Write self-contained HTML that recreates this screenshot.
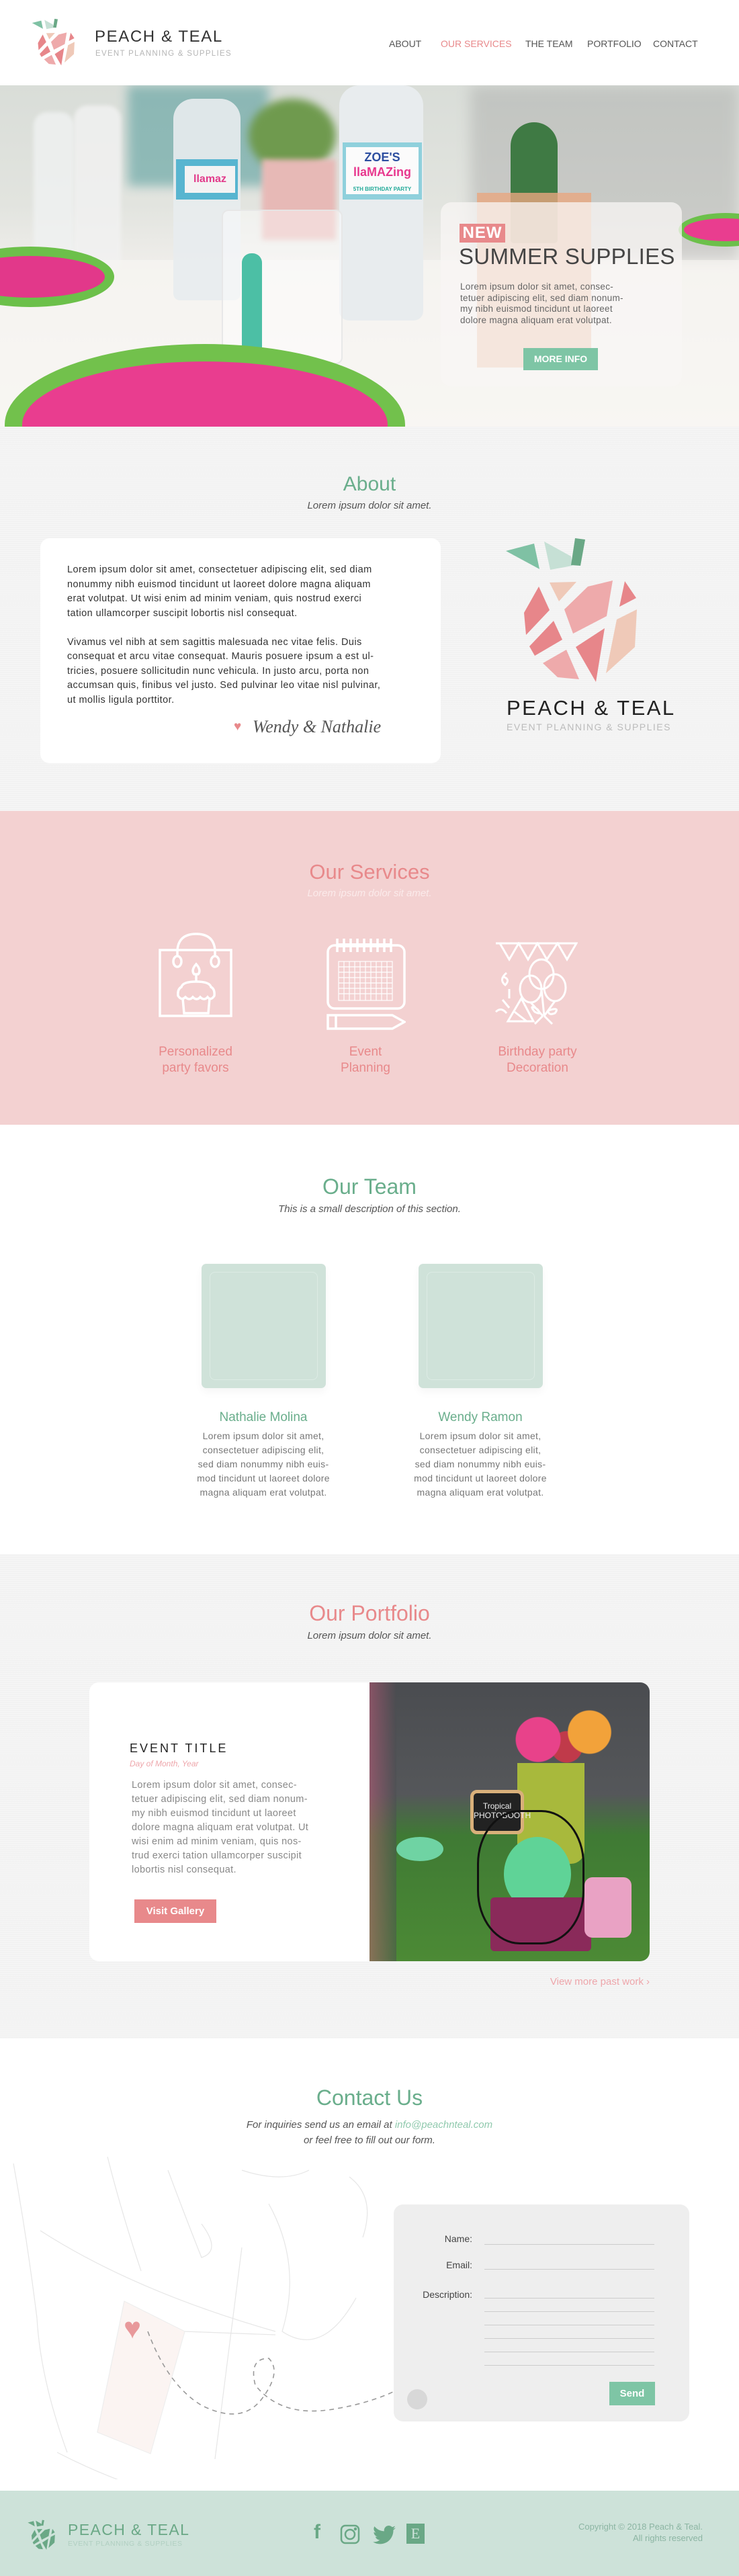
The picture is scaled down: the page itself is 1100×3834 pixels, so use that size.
<!DOCTYPE html>
<html><head><meta charset="utf-8"><style>
*{margin:0;padding:0;box-sizing:border-box}
body{width:1100px;height:3834px;position:relative;font-family:"Liberation Sans",sans-serif;background:#fff;overflow:hidden;color:#333}
.a{position:absolute}
.c{text-align:center;width:1100px;left:0}
.tex{background:#f2f2f2;background-image:repeating-linear-gradient(0deg,rgba(255,255,255,.35) 0 1px,transparent 1px 3px)}
.teal{color:#6aae8c}.pink{color:#e8898b}
</style></head><body>

<svg width="0" height="0" style="position:absolute"><defs>
<g id="logo">
<polygon points="13,30 55,19 63,57" fill="#7fc1a4"/>
<polygon points="70,16 110,38 112,52 79,58" fill="#c6e0d5"/>
<polygon points="116,11 131,13 124,52 110,51" fill="#6aa886"/>
<polygon points="78,77 118,76 92,105" fill="#efc9b8"/>
<polygon points="62,83 78,118 43,155 40,122" fill="#e7868a"/>
<polygon points="100,117 135,83 172,74 163,127 113,153" fill="#eeaaab"/>
<polygon points="190,75 207,100 182,113" fill="#e7868a"/>
<polygon points="84,134 97,162 56,186 48,172" fill="#e7868a"/>
<polygon points="117,173 160,145 147,225" fill="#e7868a"/>
<polygon points="208,117 205,173 162,212 178,132" fill="#efc9b8"/>
<polygon points="68,197 103,177 122,221 90,218" fill="#eeaaab"/>
</g></defs></svg>

<!-- header -->
<svg class="a" style="left:44px;top:27px" width="72" height="72" viewBox="10 8 205 222"><use href="#logo"/></svg>
<div class="a" style="left:141px;top:41px;font-size:24px;letter-spacing:1.6px;color:#333">PEACH &amp; TEAL</div>
<div class="a" style="left:142px;top:74px;font-size:11.5px;letter-spacing:1.3px;color:#b5b5b5">EVENT PLANNING &amp; SUPPLIES</div>
<div class="a" style="top:57px;left:579px;font-size:14px;color:#555">ABOUT</div>
<div class="a pink" style="top:57px;left:656px;font-size:14px">OUR SERVICES</div>
<div class="a" style="top:57px;left:782px;font-size:14px;color:#555">THE TEAM</div>
<div class="a" style="top:57px;left:874px;font-size:14px;color:#555">PORTFOLIO</div>
<div class="a" style="top:57px;left:972px;font-size:14px;color:#555">CONTACT</div>

<!-- hero -->
<div class="a" style="left:0;top:127px;width:1100px;height:508px;overflow:hidden;background:linear-gradient(180deg,#d9ddd8 0%,#e2e4df 35%,#f1efec 55%,#f7f5f2 100%)">
 <div class="a" style="left:190px;top:0;width:210px;height:150px;background:#2f8a8a;opacity:.45;filter:blur(8px)"></div>
 <div class="a" style="left:370px;top:20px;width:130px;height:110px;border-radius:50%;background:#6f9a4e;filter:blur(6px)"></div>
 <div class="a" style="left:390px;top:110px;width:110px;height:120px;background:#e7b9b6;filter:blur(4px)"></div>
 <div class="a" style="left:700px;top:0;width:400px;height:260px;background:#888;opacity:.28;filter:blur(10px)"></div>
 <div class="a" style="left:50px;top:40px;width:60px;height:230px;background:#f0f2f2;border-radius:20px;opacity:.8;filter:blur(3px)"></div>
 <div class="a" style="left:110px;top:30px;width:70px;height:250px;background:#f2f2f2;border-radius:20px;opacity:.8;filter:blur(3px)"></div>
 <div class="a" style="left:0;top:260px;width:1100px;height:250px;background:#f8f6f3;opacity:.6"></div>
 <div class="a" style="left:258px;top:20px;width:100px;height:300px;background:#e8ecee;border-radius:30px 30px 10px 10px;opacity:.9"></div>
 <div class="a" style="left:262px;top:110px;width:92px;height:60px;background:#58b5d0"></div>
 <div class="a" style="left:275px;top:120px;width:75px;height:40px;background:#f3f3f3;color:#e23a8a;font-weight:bold;font-size:16px;text-align:center;line-height:40px">llamaz</div>
 <div class="a" style="left:505px;top:0;width:125px;height:350px;background:#e8ecee;border-radius:30px 30px 14px 14px"></div>
 <div class="a" style="left:510px;top:85px;width:118px;height:85px;background:#8fd0dc"></div>
 <div class="a" style="left:515px;top:92px;width:108px;height:70px;background:#fbfbfb;color:#e8388e;font-weight:bold;font-size:18px;text-align:center;line-height:22px;padding-top:4px"><span style="color:#2c4ea0">ZOE'S</span><br><span style="color:#e8388e">llaMAZing</span><br><span style="font-size:8px;color:#2a9">5TH BIRTHDAY PARTY</span></div>
 <div class="a" style="left:330px;top:185px;width:180px;height:230px;background:rgba(255,255,255,.45);border:2px solid rgba(230,230,230,.9);border-radius:10px"></div>
 <div class="a" style="left:360px;top:250px;width:30px;height:160px;background:#4cbfa5;border-radius:14px"></div>
 <div class="a" style="left:760px;top:55px;width:70px;height:180px;background:#3f7a44;border-radius:35px 35px 5px 5px"></div>
 <div class="a" style="left:710px;top:160px;width:170px;height:260px;background:#e9a67f;opacity:.8"></div>
 <div class="a" style="left:-80px;top:240px;width:250px;height:90px;border-radius:50%;background:#e2388a;border:14px solid #6cc04a"></div>
 <div class="a" style="left:7px;top:385px;width:596px;height:240px;border-radius:50%;background:#e93d8f;border:26px solid #72c14c"></div>
 <div class="a" style="left:1010px;top:190px;width:140px;height:50px;border-radius:50%;background:#e93d8f;border:8px solid #6cc04a"></div>
 <div class="a" style="left:656px;top:174px;width:359px;height:274px;background:rgba(248,246,244,.75);border-radius:16px"></div>
 <div class="a" style="left:684px;top:206px;width:68px;height:28px;background:#e8898b;color:#fff;font-weight:bold;font-size:24px;line-height:28px;text-align:center;letter-spacing:1px">NEW</div>
 <div class="a" style="left:683px;top:236px;font-size:33px;color:#444;letter-spacing:.3px">SUMMER SUPPLIES</div>
 <div class="a" style="left:685px;top:292px;font-size:13.5px;letter-spacing:.3px;line-height:16.5px;color:#666">Lorem ipsum dolor sit amet, consec-<br>tetuer adipiscing elit, sed diam nonum-<br>my nibh euismod tincidunt ut laoreet<br>dolore magna aliquam erat volutpat.</div>
 <div class="a" style="left:779px;top:391px;width:111px;height:33px;background:#7ec5a5;color:#fff;font-size:14px;font-weight:bold;line-height:33px;text-align:center">MORE INFO</div>
</div>

<!-- about -->
<div class="a tex" style="left:0;top:635px;width:1100px;height:572px"></div>
<div class="a c teal" style="top:704px;font-size:30px">About</div>
<div class="a c" style="top:744px;font-size:15px;font-style:italic;color:#555">Lorem ipsum dolor sit amet.</div>
<div class="a" style="left:60px;top:801px;width:596px;height:335px;background:#fff;border-radius:14px"></div>
<div class="a" style="left:100px;top:838px;font-size:14.5px;letter-spacing:.45px;line-height:21.5px;color:#333">Lorem ipsum dolor sit amet, consectetuer adipiscing elit, sed diam<br>nonummy nibh euismod tincidunt ut laoreet dolore magna aliquam<br>erat volutpat. Ut wisi enim ad minim veniam, quis nostrud exerci<br>tation ullamcorper suscipit lobortis nisl consequat.<br><br>Vivamus vel nibh at sem sagittis malesuada nec vitae felis. Duis<br>consequat et arcu vitae consequat. Mauris posuere ipsum a est ul-<br>tricies, posuere sollicitudin nunc vehicula. In justo arcu, porta non<br>accumsan quis, finibus vel justo. Sed pulvinar leo vitae nisl pulvinar,<br>ut mollis ligula porttitor.</div>
<div class="a" style="left:348px;top:1071px;font-size:19px;color:#e8898b">♥</div>
<div class="a" style="left:376px;top:1067px;font-size:26px;font-style:italic;font-family:'Liberation Serif',serif;color:#555">Wendy &amp; Nathalie</div>
<svg class="a" style="left:740px;top:790px" width="260" height="240" viewBox="0 0 260 240"><use href="#logo"/></svg>
<div class="a" style="left:754px;top:1036px;font-size:31px;letter-spacing:2.5px;color:#222">PEACH &amp; TEAL</div>
<div class="a" style="left:754px;top:1074px;font-size:14px;letter-spacing:1.5px;color:#bbb">EVENT PLANNING &amp; SUPPLIES</div>

<!-- services -->
<div class="a" style="left:0;top:1207px;width:1100px;height:467px;background:#f3d1d1"></div>
<div class="a c pink" style="top:1280px;font-size:31px">Our Services</div>
<div class="a c" style="top:1321px;font-size:15px;font-style:italic;color:#fbeaea">Lorem ipsum dolor sit amet.</div>
<svg class="a" style="left:236px;top:1388px" width="112" height="128" viewBox="0 0 112 128" fill="none" stroke="#fff" stroke-width="3.5">
<rect x="2" y="26" width="106" height="98"/><path d="M28 34 V26 Q30 2 56 2 Q82 2 84 26 V34"/><ellipse cx="28" cy="43" rx="6" ry="8"/><ellipse cx="84" cy="43" rx="6" ry="8"/>
<path d="M56 47 Q48 56 53 62 H59 Q64 56 56 47Z M56 62 V73"/><path d="M34 81 Q36 73 56 73 Q76 73 78 81 Q84 84 83 94 Q78 102 73 96 Q68 102 62 96 Q57 102 51 96 Q46 102 40 96 Q34 102 29 94 Q28 84 34 81Z"/><path d="M36 98 L38 120 H74 L76 98"/></svg>
<svg class="a" style="left:486px;top:1395px" width="118" height="138" viewBox="0 0 118 138" fill="none" stroke="#fff" stroke-width="3.5">
<rect x="2" y="12" width="114" height="94" rx="10"/><path d="M16 2V22M26 2V22M36 2V22M46 2V22M56 2V22M66 2V22M76 2V22M86 2V22M96 2V22" /><path d="M16 12H96" stroke-width="6"/>
<g stroke-width="1.2"><rect x="18" y="36" width="80" height="58"/><path d="M26 36V94M34 36V94M42 36V94M50 36V94M58 36V94M66 36V94M74 36V94M82 36V94M90 36V94M18 44H98M18 52H98M18 60H98M18 68H98M18 76H98M18 84H98"/></g>
<path d="M2 116H98L116 126L98 136H2Z M14 116V136"/></svg>
<svg class="a" style="left:736px;top:1402px" width="124" height="124" viewBox="0 0 124 124" fill="none" stroke="#fff" stroke-width="3">
<path d="M2 2H122L108 26L94 2L78 26L64 2L50 26L36 2L22 26L8 2"/><ellipse cx="70" cy="48" rx="18" ry="22"/><ellipse cx="54" cy="70" rx="16" ry="20"/><ellipse cx="90" cy="68" rx="16" ry="20"/><path d="M70 70L74 110M54 90L72 110M90 88L74 110M72 110L60 122M74 110L86 122M64 100Q50 92 60 104Q72 110 64 100M80 102Q98 96 90 106Q80 110 80 102"/>
<path d="M20 118L40 84L58 118Z M30 104L48 118"/><path d="M18 46Q6 56 16 64Q24 56 14 52M12 86L22 98M22 70V84M2 104Q10 96 18 106"/></svg>
<div class="a pink" style="left:191px;top:1554px;width:200px;text-align:center;font-size:19px;line-height:24px">Personalized<br>party favors</div>
<div class="a pink" style="left:444px;top:1554px;width:200px;text-align:center;font-size:19px;line-height:24px">Event<br>Planning</div>
<div class="a pink" style="left:700px;top:1554px;width:200px;text-align:center;font-size:19px;line-height:24px">Birthday party<br>Decoration</div>

<!-- team -->
<div class="a c teal" style="top:1748px;font-size:32px">Our Team</div>
<div class="a c" style="top:1791px;font-size:15px;font-style:italic;color:#555">This is a small description of this section.</div>
<div class="a" style="left:300px;top:1881px;width:185px;height:185px;background:#cfe2d9;border-radius:7px;box-shadow:0 6px 12px rgba(0,0,0,.04)"><div style="margin:12px;height:161px;border:1px solid #dcebe4;border-radius:8px"></div></div>
<div class="a" style="left:623px;top:1881px;width:185px;height:185px;background:#cfe2d9;border-radius:7px;box-shadow:0 6px 12px rgba(0,0,0,.04)"><div style="margin:12px;height:161px;border:1px solid #dcebe4;border-radius:8px"></div></div>
<div class="a teal" style="left:242px;top:2099px;width:300px;text-align:center;font-size:19px">Nathalie Molina</div>
<div class="a teal" style="left:565px;top:2099px;width:300px;text-align:center;font-size:19px">Wendy Ramon</div>
<div class="a" style="left:242px;top:2127px;width:300px;text-align:center;font-size:14px;letter-spacing:.3px;line-height:21px;color:#777">Lorem ipsum dolor sit amet,<br>consectetuer adipiscing elit,<br>sed diam nonummy nibh euis-<br>mod tincidunt ut laoreet dolore<br>magna aliquam erat volutpat.</div>
<div class="a" style="left:565px;top:2127px;width:300px;text-align:center;font-size:14px;letter-spacing:.3px;line-height:21px;color:#777">Lorem ipsum dolor sit amet,<br>consectetuer adipiscing elit,<br>sed diam nonummy nibh euis-<br>mod tincidunt ut laoreet dolore<br>magna aliquam erat volutpat.</div>

<!-- portfolio -->
<div class="a tex" style="left:0;top:2313px;width:1100px;height:721px"></div>
<div class="a c pink" style="top:2383px;font-size:32px">Our Portfolio</div>
<div class="a c" style="top:2426px;font-size:15px;font-style:italic;color:#555">Lorem ipsum dolor sit amet.</div>
<div class="a" style="left:133px;top:2504px;width:834px;height:415px;background:#fff;border-radius:14px;overflow:hidden">
 <div class="a" style="left:417px;top:0;width:417px;height:415px;background:linear-gradient(180deg,#4a4c50 0%,#55575a 40%,#3f7a34 55%,#4c8a35 100%)">
  <div class="a" style="left:0;top:0;width:40px;height:415px;background:linear-gradient(90deg,#c45a7a,#4a4c50);opacity:.5"></div>
  <div class="a" style="left:40px;top:230px;width:70px;height:36px;border-radius:50%;background:#6fd3a3"></div>
  <div class="a" style="left:220px;top:120px;width:100px;height:150px;background:#a8b93c;border-radius:0 0 20px 20px"></div>
  <div class="a" style="left:150px;top:160px;width:80px;height:66px;background:#222;border:5px solid #d9b07a;border-radius:10px;color:#eee;font-size:12px;text-align:center;padding-top:12px">Tropical<br>PHOTOBOOTH</div>
  <div class="a" style="left:200px;top:30px;width:170px;height:110px;background:radial-gradient(circle at 30% 50%,#e8428a 0 25%,transparent 26%),radial-gradient(circle at 75% 40%,#f2a23a 0 22%,transparent 23%),radial-gradient(circle at 55% 60%,#c03a4a 0 20%,transparent 21%)"></div>
  <div class="a" style="left:200px;top:230px;width:100px;height:110px;border-radius:50%;background:#5fd397"></div>
  <div class="a" style="left:180px;top:320px;width:150px;height:80px;background:#8a2a5a;border-radius:6px"></div>
  <div class="a" style="left:320px;top:290px;width:70px;height:90px;background:#e9a2c4;border-radius:12px"></div>
  <div class="a" style="left:160px;top:190px;width:160px;height:200px;border:3px solid #111;border-radius:40%"></div>
 </div>
</div>
<div class="a" style="left:193px;top:2592px;font-size:18px;letter-spacing:3px;color:#222">EVENT TITLE</div>
<div class="a" style="left:193px;top:2618px;font-size:12px;font-style:italic;color:#eea6ab">Day of Month, Year</div>
<div class="a" style="left:196px;top:2647px;font-size:14.5px;letter-spacing:.35px;line-height:21px;color:#888">Lorem ipsum dolor sit amet, consec-<br>tetuer adipiscing elit, sed diam nonum-<br>my nibh euismod tincidunt ut laoreet<br>dolore magna aliquam erat volutpat. Ut<br>wisi enim ad minim veniam, quis nos-<br>trud exerci tation ullamcorper suscipit<br>lobortis nisl consequat.</div>
<div class="a" style="left:200px;top:2827px;width:122px;height:35px;background:#e8898b;color:#fff;font-size:15px;font-weight:bold;line-height:35px;text-align:center">Visit Gallery</div>
<div class="a" style="left:747px;top:2941px;width:220px;text-align:right;font-size:15px;color:#eea6ab">View more past work ›</div>

<!-- contact -->
<div class="a c teal" style="top:3104px;font-size:32px">Contact Us</div>
<div class="a c" style="top:3151px;font-size:15px;font-style:italic;color:#555;line-height:23px">For inquiries send us an email at <span style="color:#8fc9ad">info@peachnteal.com</span><br>or feel free to fill out our form.</div>
<svg class="a" style="left:0;top:3210px" width="720" height="480" viewBox="0 0 720 480" fill="none" stroke="#e6e6e6" stroke-width="1.2">
<path d="M60 110 Q200 200 410 260" /><path d="M185 215 L145 410 L220 440 L275 260"/><path d="M275 260 L410 265"/><path d="M360 135 L320 450"/><path d="M85 440 Q240 520 400 530"/>
<path d="M20 10 Q40 120 55 240 Q60 330 100 440 M160 0 Q180 80 210 170 M250 20 Q280 100 300 150 Q330 140 300 100 M400 70 Q450 160 420 260 Q480 300 530 210 M520 30 Q560 60 540 120 M360 20 Q420 40 460 20"/>
<polygon points="185,215 275,260 224,442 145,410" fill="#fbf4f2" stroke="#eee"/>
<path d="M220 260 Q250 340 300 370 Q360 400 390 360 Q420 320 400 300 Q370 300 380 340 Q420 390 500 375 Q560 365 605 340" stroke="#999" stroke-width="1.6" stroke-dasharray="7 6"/>
</svg>
<div class="a" style="left:184px;top:3444px;font-size:44px;color:#e8999b;line-height:44px">♥</div>
<div class="a" style="left:586px;top:3281px;width:440px;height:323px;background:#eeeeee;border-radius:14px"></div>
<div class="a" style="left:606px;top:3556px;width:30px;height:30px;border-radius:50%;background:#d8d8d8"></div>
<div class="a" style="left:560px;top:3324px;width:143px;text-align:right;font-size:14px;color:#444">Name:</div>
<div class="a" style="left:560px;top:3363px;width:143px;text-align:right;font-size:14px;color:#444">Email:</div>
<div class="a" style="left:560px;top:3407px;width:143px;text-align:right;font-size:14px;color:#444">Description:</div>
<div class="a" style="left:721px;top:3340px;width:253px;border-top:1px solid #ccc"></div>
<div class="a" style="left:721px;top:3377px;width:253px;border-top:1px solid #ccc"></div>
<div class="a" style="left:721px;top:3420px;width:253px;border-top:1px solid #ccc"></div>
<div class="a" style="left:721px;top:3440px;width:253px;border-top:1px solid #ccc"></div>
<div class="a" style="left:721px;top:3460px;width:253px;border-top:1px solid #ccc"></div>
<div class="a" style="left:721px;top:3480px;width:253px;border-top:1px solid #ccc"></div>
<div class="a" style="left:721px;top:3500px;width:253px;border-top:1px solid #ccc"></div>
<div class="a" style="left:721px;top:3520px;width:253px;border-top:1px solid #ccc"></div>
<div class="a" style="left:907px;top:3545px;width:68px;height:35px;background:#7ec5a5;color:#fff;font-size:15px;font-weight:bold;line-height:35px;text-align:center">Send</div>

<!-- footer -->
<div class="a" style="left:0;top:3707px;width:1100px;height:127px;background:#cde2d9"></div>
<svg class="a" style="left:40px;top:3750px" width="44" height="46" viewBox="10 8 205 222"><g fill="#6aa886"><polygon points="13,30 55,19 63,57"/><polygon points="70,16 110,38 112,52 79,58"/><polygon points="116,11 131,13 124,52 110,51"/><polygon points="78,77 118,76 92,105"/><polygon points="62,83 78,118 43,155 40,122"/><polygon points="100,117 135,83 172,74 163,127 113,153"/><polygon points="190,75 207,100 182,113"/><polygon points="84,134 97,162 56,186 48,172"/><polygon points="117,173 160,145 147,225"/><polygon points="208,117 205,173 162,212 178,132"/><polygon points="68,197 103,177 122,221 90,218"/></g></svg>
<div class="a" style="left:101px;top:3752px;font-size:23px;letter-spacing:1.4px;color:#6aa886">PEACH &amp; TEAL</div>
<div class="a" style="left:101px;top:3780px;font-size:10.5px;letter-spacing:.6px;color:#b0cfc1">EVENT PLANNING &amp; SUPPLIES</div>
<div class="a" style="left:467px;top:3752px;font-size:30px;font-weight:bold;color:#6aa886;line-height:34px">f</div>
<svg class="a" style="left:506px;top:3757px" width="30" height="30" viewBox="0 0 30 30" fill="none" stroke="#6aa886" stroke-width="2.5"><rect x="2" y="2" width="26" height="26" rx="6"/><circle cx="15" cy="15" r="7"/><circle cx="23" cy="7" r="1" fill="#6aa886"/></svg>
<svg class="a" style="left:555px;top:3758px" width="34" height="30" viewBox="0 0 24 20"><path fill="#6aa886" d="M24 2.4c-.9.4-1.8.7-2.8.8 1-.6 1.8-1.6 2.2-2.700-1 .6-2 1-3.1 1.2A4.9 4.9 0 0 0 11.9 6 14 14 0 0 1 1.7.9a4.9 4.9 0 0 0 1.5 6.6c-.8 0-1.6-.3-2.200-.6 0 2.4 1.700 4.400 3.900 4.800-.7.2-1.5.2-2.2.1.6 2 2.4 3.4 4.6 3.4A9.9 9.9 0 0 1 0 17.2 14 14 0 0 0 7.5 19.4c9.1 0 14-7.5 14-14v-.6c1-.7 1.8-1.6 2.5-2.4z"/></svg>
<div class="a" style="left:605px;top:3756px;width:27px;height:30px;background:#6aa886;color:#cde2d9;font-family:'Liberation Serif',serif;font-size:22px;line-height:30px;text-align:center">E</div>
<div class="a" style="left:746px;top:3752px;width:300px;text-align:right;font-size:13px;line-height:17px;color:#8cb5a3">Copyright © 2018 Peach &amp; Teal.<br>All rights reserved</div>
</body></html>
